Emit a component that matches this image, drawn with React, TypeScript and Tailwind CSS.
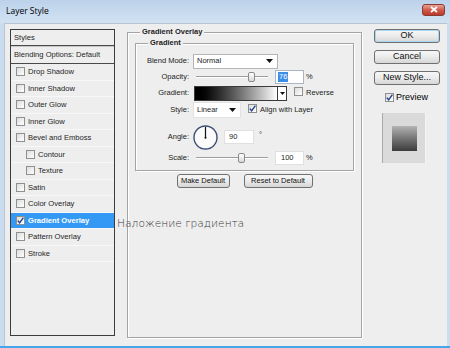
import React from 'react'

const font = { fontFamily: '"Liberation Sans", Arial, sans-serif' }

function Box({ checked = false }: { checked?: boolean }) {
  return (
    <span className="relative inline-flex w-[9px] h-[9px] shrink-0 border border-[#8e8f8f] bg-linear-to-br from-[#dcdcdc] to-white">
      {checked && (
        <svg viewBox="0 0 9 9" className="absolute -left-px -top-px w-[9px] h-[9px]">
          <path d="M1.8 4.6 L3.6 6.8 L7.4 1.6" fill="none" stroke="#23428c" strokeWidth="1.4" />
        </svg>
      )}
    </span>
  )
}

function Slider({ thumb }: { thumb: string }) {
  return (
    <div className="relative ml-[3px] w-[72px] h-[12px] flex items-center">
      <div className="w-full h-[2px] border-t border-[#9c9c9c] border-b border-b-white" />
      <div className={`absolute top-[1px] w-[7px] h-[10px] rounded-[2px] border border-[#8a8a8a] bg-linear-to-b from-white to-[#d8d8d8] ${thumb}`} />
    </div>
  )
}

function Btn({ children, className = '' }: { children: React.ReactNode; className?: string }) {
  return (
    <div
      className={`flex items-center justify-center rounded-[3px] border border-[#707070] bg-linear-to-b from-[#f7f7f7] via-[#ebebeb] to-[#d6d6d6] text-[#111] ${className}`}
    >
      {children}
    </div>
  )
}

function Arrow() {
  return (
    <svg viewBox="0 0 7 4" className="w-[7px] h-[4px]">
      <path d="M0 0 H7 L3.5 4 Z" fill="#111" />
    </svg>
  )
}

const rows: { label: string; checked?: boolean; sub?: boolean; active?: boolean }[] = [
  { label: 'Drop Shadow' },
  { label: 'Inner Shadow' },
  { label: 'Outer Glow' },
  { label: 'Inner Glow' },
  { label: 'Bevel and Emboss' },
  { label: 'Contour', sub: true },
  { label: 'Texture', sub: true },
  { label: 'Satin' },
  { label: 'Color Overlay' },
  { label: 'Gradient Overlay', checked: true, active: true },
  { label: 'Pattern Overlay' },
  { label: 'Stroke' },
]

export default function App() {
  return (
    <div
      className="relative w-[450px] h-[348px] flex flex-col overflow-hidden bg-[#cadcf0] border-b-2 border-[#46a6ea]"
      style={font}
    >
      {/* title bar */}
      <div className="h-[23px] shrink-0 flex items-center justify-between pl-[6px] pr-[5px] bg-linear-to-b from-[#bcd2ea] to-[#d2e2f3]">
        <span className="text-[8.5px] text-black" style={{ fontFamily: '"Open Sans", "Liberation Sans", sans-serif' }}>
          Layer Style
        </span>
        <div className="-mt-[4px] w-[23px] h-[12px] rounded-[3px] border border-[#8b3a33] bg-linear-to-b from-[#e8a397] via-[#d0594a] to-[#b93a2c] flex items-center justify-center">
          <svg viewBox="0 0 8 7" className="w-[8px] h-[7px]">
            <path d="M1 1 L7 6 M7 1 L1 6" stroke="white" strokeWidth="1.8" />
          </svg>
        </div>
      </div>

      {/* body */}
      <div className="flex-1 mx-[4px] mr-[3px] bg-[#eeeeee] border-l border-t border-[#b9c4d0] flex pl-[5px] pt-[2px]">
        {/* styles list */}
        <div className="mt-[3px] w-[105px] h-[307px] border border-[#3c3c3c] bg-[#eeeeee] text-[7.6px] text-[#1e1e1e] flex flex-col">
          <div className="h-[16px] flex items-center pl-[3px] border-b border-[#4a4a4a]">Styles</div>
          <div className="h-[18px] flex items-center pl-[3px] border-t border-[#c8c8c8] border-b border-b-[#4a4a4a]">
            Blending Options: Default
          </div>
          {rows.map((r) => (
            <div
              key={r.label}
              className={`h-[16.5px] flex items-center gap-[2px] border-b border-[#f8f8f8] ${r.sub ? 'pl-[15px]' : 'pl-[5px]'} ${
                r.active ? 'bg-[#3399f5] text-white font-bold' : ''
              }`}
            >
              <Box checked={r.checked} />
              <span className="ml-[1px]">{r.label}</span>
            </div>
          ))}
        </div>

        {/* gradient overlay group */}
        <div className="ml-[12px] mt-[6px] w-[235px] h-[306px] border border-[#a4a4a4] shadow-[inset_1px_1px_0_#fff,1px_1px_0_#fff] flex flex-col text-[7.5px] text-[#1c1c1c]">
          <div className="-mt-[7px] ml-[12px] h-[12px] w-fit px-[2px] bg-[#eeeeee] font-bold leading-[12px]">Gradient Overlay</div>

          <div className="mt-[5px] mx-[7px] border border-[#a4a4a4] shadow-[inset_1px_1px_0_#fff,1px_1px_0_#fff] flex flex-col pb-[6px]">
            <div className="-mt-[7px] ml-[12px] h-[12px] w-fit px-[2px] bg-[#eeeeee] font-bold leading-[12px]">Gradient</div>

            {/* blend mode */}
            <div className="mt-[4px] h-[16px] flex items-center">
              <span className="w-[53px] text-right">Blend Mode:</span>
              <div className="ml-[4px] w-[85px] h-[15px] bg-white border border-[#b5b5b5] flex items-center justify-between pl-[3px] pr-[4px]">
                <span>Normal</span>
                <Arrow />
              </div>
            </div>

            {/* opacity */}
            <div className="h-[16px] flex items-center">
              <span className="w-[53px] text-right">Opacity:</span>
              <div className="ml-[4px]">
                <Slider thumb="left-[52px]" />
              </div>
              <div className="ml-[7px] w-[29px] h-[14px] bg-white border border-[#aab6c4] flex items-center pl-[2px]">
                <span className="bg-[#3a8ee8] text-white px-[1px] leading-[10px]">76</span>
              </div>
              <span className="ml-[2px]">%</span>
            </div>

            {/* gradient */}
            <div className="h-[16px] flex items-center">
              <span className="w-[53px] text-right">Gradient:</span>
              <div className="ml-[5px] flex h-[15px] border border-[#3a3a3a]">
                <div className="w-[82px] h-full bg-linear-to-r from-black to-white" />
                <div className="w-[9px] h-full bg-white border-l border-[#3a3a3a] flex items-center justify-center">
                  <svg viewBox="0 0 5 3" className="w-[5px] h-[3px]">
                    <path d="M0 0 H5 L2.5 3 Z" fill="#111" />
                  </svg>
                </div>
              </div>
              <span className="ml-[7px]">
                <Box />
              </span>
              <span className="ml-[3px]">Reverse</span>
            </div>

            {/* style */}
            <div className="mt-[1px] h-[16px] flex items-center">
              <span className="w-[53px] text-right">Style:</span>
              <div className="ml-[4px] w-[48px] h-[16px] bg-white border border-[#e2e2e2] flex items-center justify-between pl-[3px] pr-[4px]">
                <span>Linear</span>
                <Arrow />
              </div>
              <span className="ml-[7px]">
                <Box checked />
              </span>
              <span className="ml-[3px]">Align with Layer</span>
            </div>

            {/* angle */}
            <div className="mt-[5px] h-[28px] flex items-center">
              <span className="w-[53px] text-right">Angle:</span>
              <svg viewBox="0 0 25 25" className="ml-[4px] w-[25px] h-[25px]">
                <circle cx="12.5" cy="12.5" r="11.5" fill="#fbfbfb" stroke="#3d4f73" strokeWidth="1.4" />
                <line x1="12.5" y1="12.8" x2="12.5" y2="2" stroke="#111" strokeWidth="1.2" />
                <circle cx="12.5" cy="12.8" r="1" fill="#111" />
              </svg>
              <div className="ml-[6px] w-[30px] h-[14px] bg-white border border-[#e0e0e0] flex items-center pl-[4px]">90</div>
              <span className="ml-[5px] -mt-[4px]">°</span>
            </div>

            {/* scale */}
            <div className="h-[13px] flex items-center">
              <span className="w-[53px] text-right">Scale:</span>
              <div className="ml-[4px]">
                <Slider thumb="left-[42px]" />
              </div>
              <div className="ml-[7px] w-[29px] h-[14px] bg-white border border-[#e0e0e0] flex items-center pl-[5px]">100</div>
              <span className="ml-[2px]">%</span>
            </div>
          </div>

          <div className="mt-[3px] flex justify-center gap-[14px]">
            <Btn className="w-[53px] h-[14px]">Make Default</Btn>
            <Btn className="w-[69px] h-[14px]">Reset to Default</Btn>
          </div>
        </div>

        {/* right column */}
        <div className="ml-[12px] mt-[3px] w-[66px] flex flex-col text-[9px]">
          <Btn className="h-[14px] border-[#3c7fb1] shadow-[inset_0_0_0_1px_#a8d8f4]">OK</Btn>
          <Btn className="mt-[7px] h-[14px]">Cancel</Btn>
          <Btn className="mt-[7px] h-[14px]">New Style...</Btn>
          <div className="mt-[7px] h-[11px] flex items-center pl-[11px]">
            <Box checked />
            <span className="ml-[2px]">Preview</span>
          </div>
          <div className="mt-[10px] ml-[8px] w-[44px] h-[50px] bg-[#dadada] border-l border-[#a9a9a9] border-r border-r-[#f4f4f4] flex items-center justify-center">
            <div className="w-[25px] h-[25px] bg-linear-to-b from-[#b4b4b4] to-[#3c3c3c]" />
          </div>
        </div>
      </div>

      {/* caption over the dialog */}
      <div
        className="absolute left-[117px] top-[216px] text-[10.7px] leading-[16px] text-[#3a3a3a] font-extralight"
        style={{ fontFamily: '"DejaVu Sans", sans-serif' }}
      >
        Наложение градиента
      </div>
    </div>
  )
}
